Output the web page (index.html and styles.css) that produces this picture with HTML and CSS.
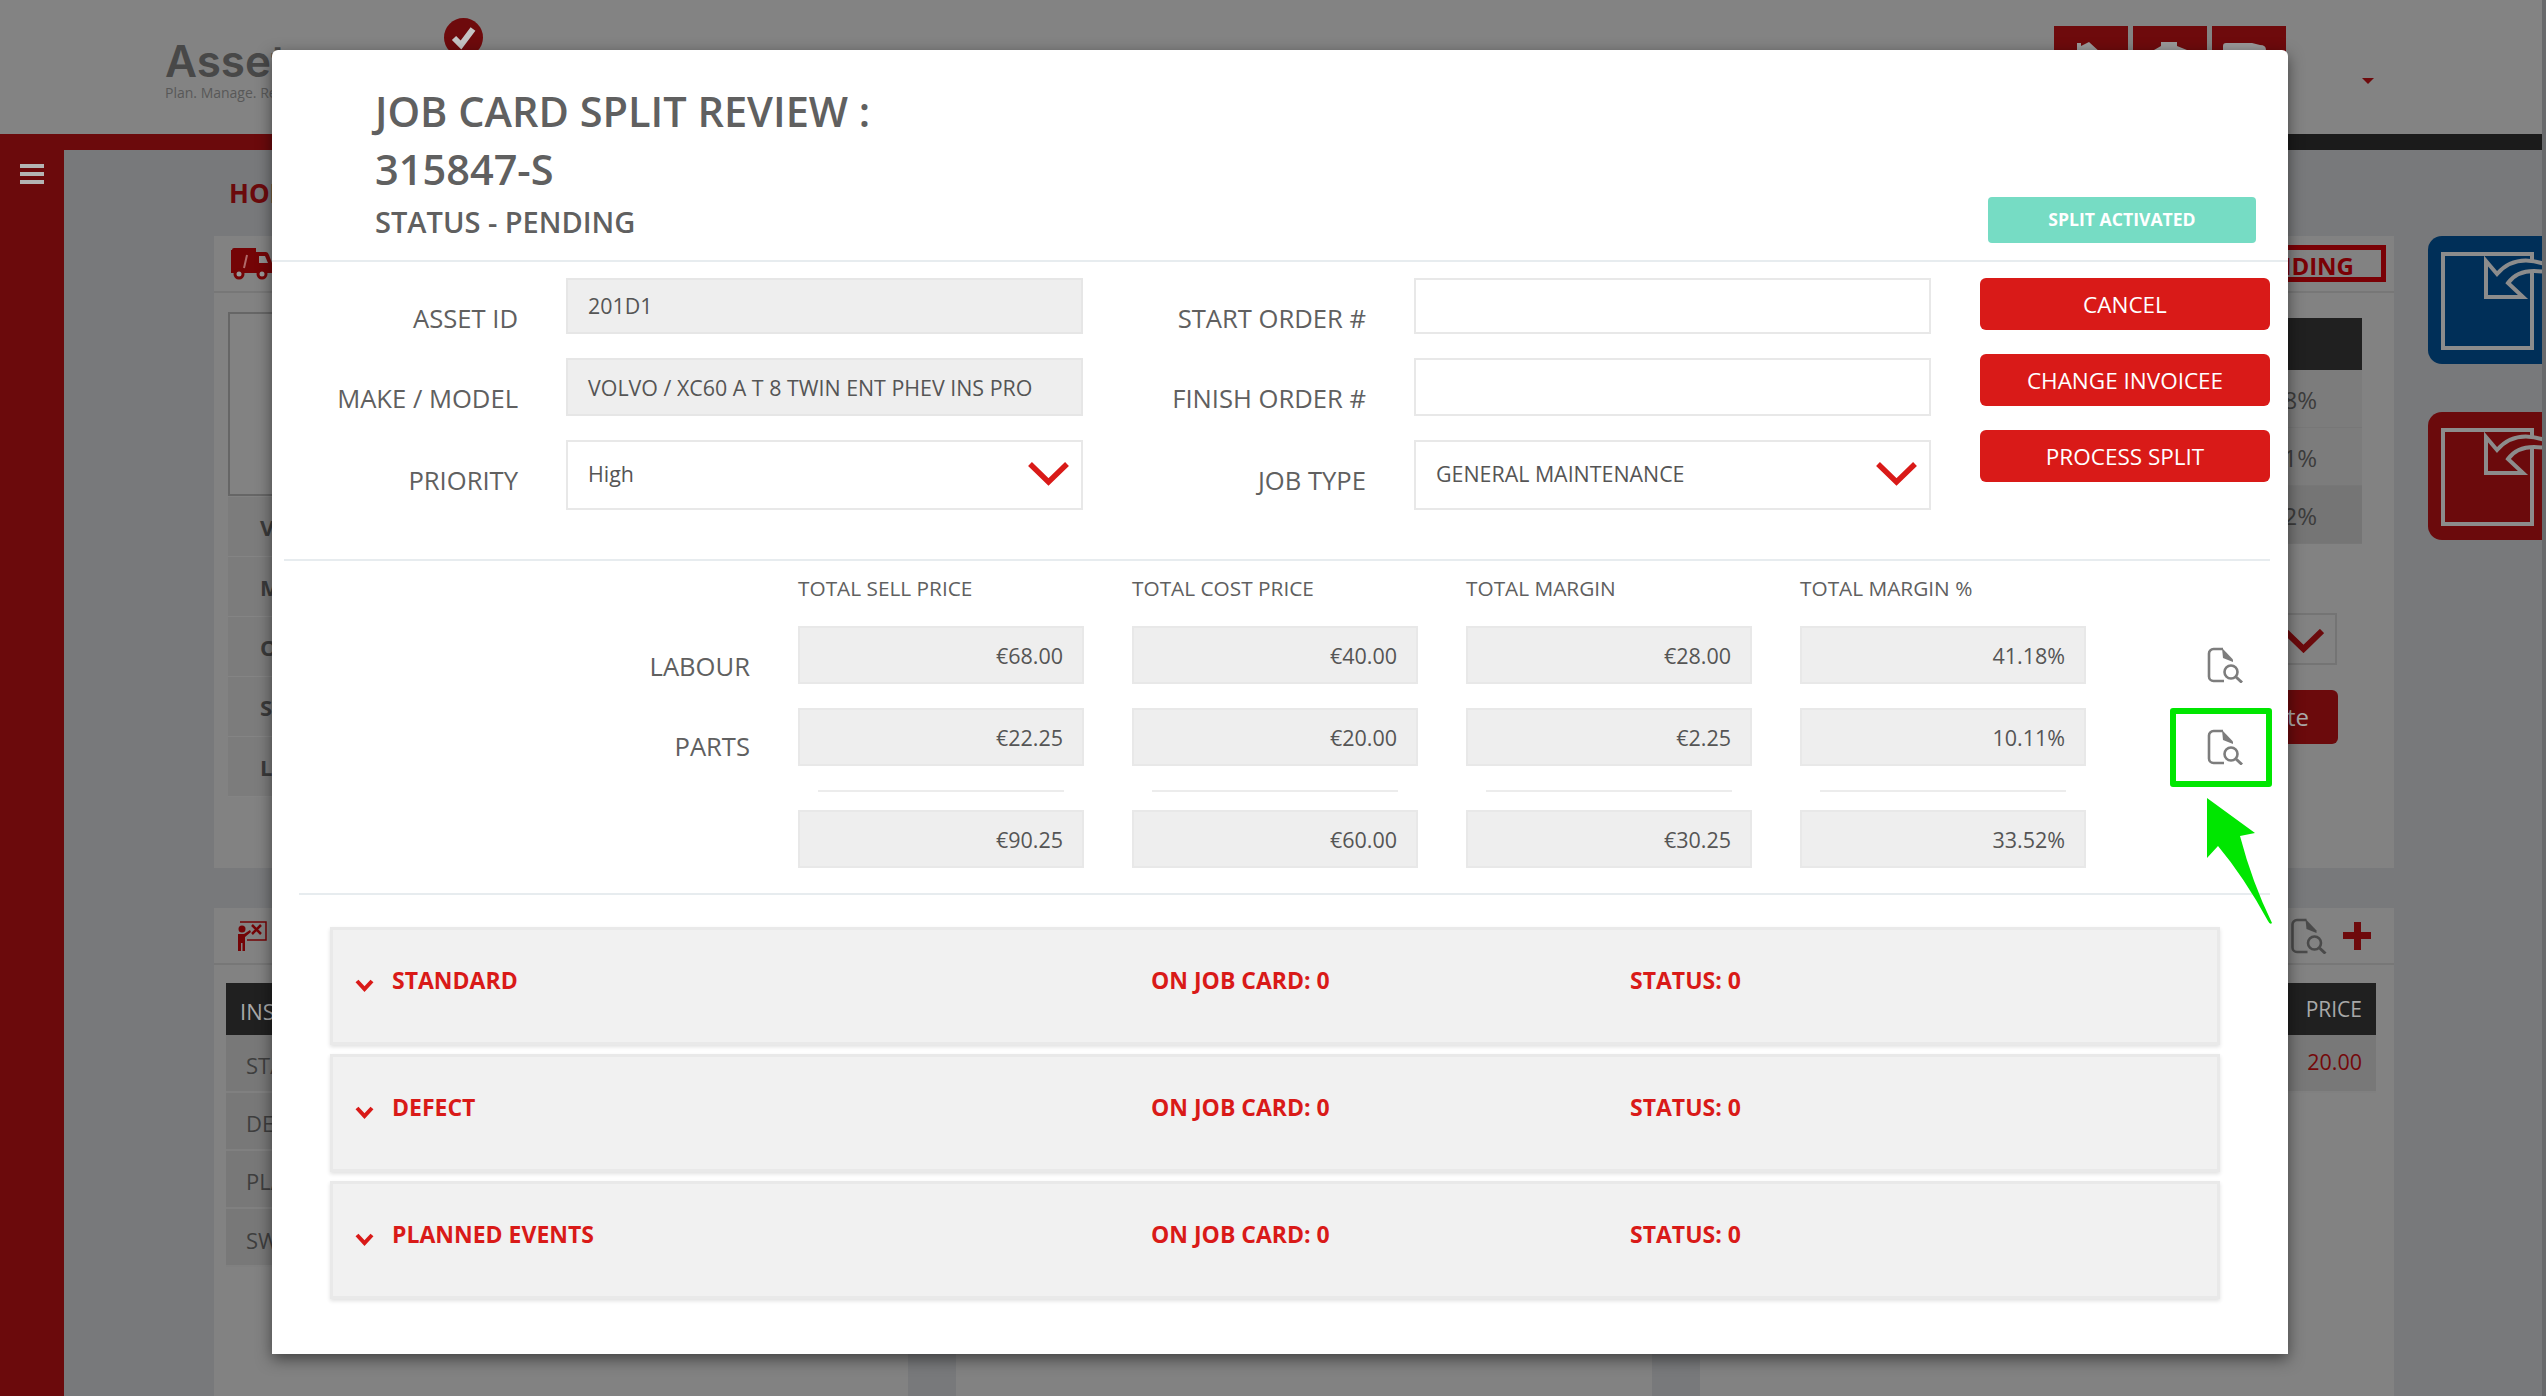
FILE: index.html
```html
<!DOCTYPE html>
<html lang="en">
<head>
    <meta charset="UTF-8">
    <meta name="viewport" content="width=device-width, initial-scale=1.0">
    <title>Job Card Split Review</title>
    <link rel="stylesheet" href="styles.css">
</head>
<body>
    <svg class="defs" width="0" height="0">
        <symbol id="doc-search" viewBox="0 0 36 36">
            <path d="M16 2H6.500a4.500 4.500 0 0 0-4.500 4.500v23a4.500 4.500 0 0 0 4.500 4.500H17" fill="none" stroke="currentColor" stroke-width="2.600"/>
            <path d="M15 1 26 12.500V15L16 11Z" fill="currentColor"/>
            <circle cx="24" cy="25" r="6.500" fill="none" stroke="currentColor" stroke-width="2.600"/>
            <path d="M29 30 35 35.500" fill="none" stroke="currentColor" stroke-width="3"/>
        </symbol>
        <symbol id="tile-icon" viewBox="0 0 130 128">
            <rect x="15" y="18" width="89" height="94" fill="none" stroke="#8c8c8c" stroke-width="4"/>
            <path d="M58 25 69 38Q88 16 122 30V37Q92 30 80 47L95 61H58Z" fill="var(--tile)" stroke="#8c8c8c" stroke-width="4"/>
        </symbol>
    </svg>

    <div class="window">
        <header class="topbar">
            <div class="logo">
                <div class="logo-name">Asset</div>
                <div class="logo-tag">Plan. Manage. Report.</div>
            </div>
            <svg class="logo-check" width="39" height="39" viewBox="0 0 39 39">
                <circle cx="19.500" cy="19.500" r="19.500" fill="#6e0a0c"/>
                <path d="M10 20 17 27 29 11" fill="none" stroke="#c4c4c4" stroke-width="6"/>
            </svg>
            <nav class="topnav">
                <div class="topnav-btn">
                    <svg width="74" height="60" viewBox="0 0 74 60"><path d="M23 24V17H27V20L35 16 47 27V40H23Z" fill="#9a9a9a"/></svg>
                </div>
                <div class="topnav-btn">
                    <svg width="74" height="60" viewBox="0 0 74 60"><path d="M21 24 28 20V16H44V20L54 24V40H21Z" fill="#9a9a9a"/></svg>
                </div>
                <div class="topnav-btn">
                    <svg width="74" height="60" viewBox="0 0 74 60"><path d="M11 20Q11 17 14 17H40L48 19Q54 19 54 24V40H11Z" fill="#9a9a9a"/></svg>
                </div>
            </nav>
            <div class="user-caret"></div>
        </header>
        <div class="stripe">
            <div class="stripe-red"></div>
            <div class="stripe-black"></div>
        </div>

        <div class="shell">
            <aside class="sidenav">
                <div class="burger"><span></span><span></span><span></span></div>
            </aside>
            <main class="content">
                <div class="crumb">HOME</div>
                <div></div>

                <div class="content-left">
                    <section class="card card-vehicle">
                        <div class="card-head">
                            <svg width="42" height="32" viewBox="0 0 42 32">
                                <path d="M2 2Q2 0 4 0H26V4H36Q38 4 39 7L42 15V25H1V2Z" fill="#740406"/>
                                <path d="M29 8H35L38 15H29Z" fill="#8e8e8e"/>
                                <path d="M17 7 14 20" stroke="#b06a6a" stroke-width="2"/>
                                <circle cx="9" cy="26" r="5.500" fill="#740406"/><circle cx="9" cy="26" r="2.500" fill="#999"/>
                                <circle cx="32" cy="26" r="5.500" fill="#740406"/><circle cx="32" cy="26" r="2.500" fill="#999"/>
                            </svg>
                            <div class="badge">PENDING</div>
                        </div>
                        <div class="card-body">
                            <div class="vehicle-left">
                                <div class="photo-box"></div>
                                <div class="info-row">VIN</div>
                                <div class="info-row">MAKE</div>
                                <div class="info-row">ODOMETER</div>
                                <div class="info-row">STATUS</div>
                                <div class="info-row">LOCATION</div>
                            </div>
                            <div class="vehicle-right">
                                <div class="mini-head"></div>
                                <div class="mini-row">41.18%</div>
                                <div class="mini-row">10.11%</div>
                                <div class="mini-row mini-dark">33.52%</div>
                                <div class="mini-select">
                                    <svg width="41" height="24" viewBox="0 0 41 24"><path d="M2 2 20.500 20 39 2" fill="none" stroke="#6b0a0c" stroke-width="6"/></svg>
                                </div>
                                <div class="mini-btn">Update</div>
                            </div>
                        </div>
                    </section>

                    <section class="card card-inspect">
                        <div class="card-head">
                            <svg class="teach-icon" width="30" height="30" viewBox="0 0 30 30">
                                <circle cx="5" cy="8" r="3.500" fill="#740406"/>
                                <path d="M1 13H7L13 9 14 11 8 16V30H5.500V22H4V30H1Z" fill="#740406"/>
                                <path d="M3 1H29V19H10" fill="none" stroke="#740406" stroke-width="1.500"/>
                                <path d="M15 4 24 13M24 4 15 13" stroke="#740406" stroke-width="2.500"/>
                            </svg>
                            <div class="card-tools">
                                <svg class="doc-dark" width="37" height="36"><use href="#doc-search"/></svg>
                                <div class="plus"></div>
                            </div>
                        </div>
                        <div class="inspect-table">
                            <div class="inspect-head"><span>INSPECTION</span><span class="price-head">PRICE</span></div>
                            <div class="inspect-row"><span>STANDARD</span><span class="price">20.00</span></div>
                            <div class="inspect-row inspect-short"><span>DEFECT</span></div>
                            <div class="inspect-row inspect-short"><span>PLANNED EVENTS</span></div>
                            <div class="inspect-row inspect-short"><span>SWITCH</span></div>
                        </div>
                    </section>

                    <div class="card-trio">
                        <div class="card"></div>
                        <div class="card"></div>
                        <div class="card"></div>
                    </div>
                </div>

                <div class="tiles">
                    <svg class="tile tile-blue" width="148" height="128"><use href="#tile-icon" width="130" height="128"/></svg>
                    <svg class="tile tile-red" width="148" height="128"><use href="#tile-icon" width="130" height="128"/></svg>
                </div>
            </main>
        </div>
    </div>

    <div class="modal">
        <div class="modal-head">
            <div class="modal-titles">
                <h1>JOB CARD SPLIT REVIEW :<br>315847-S</h1>
                <h2>STATUS - PENDING</h2>
            </div>
            <div class="split-chip">SPLIT ACTIVATED</div>
        </div>

        <div class="job-form">
            <label class="form-label">ASSET ID</label>
            <div class="field field-off">201D1</div>
            <label class="form-label">START ORDER #</label>
            <div class="field"></div>

            <label class="form-label">MAKE / MODEL</label>
            <div class="field field-off field-tall">VOLVO / XC60 A T 8 TWIN ENT PHEV INS PRO</div>
            <label class="form-label">FINISH ORDER #</label>
            <div class="field"></div>

            <label class="form-label">PRIORITY</label>
            <div class="field field-select">High
                <svg width="41" height="24" viewBox="0 0 41 24"><path d="M2 2 20.500 20 39 2" fill="none" stroke="#d91a18" stroke-width="5.500"/></svg>
            </div>
            <label class="form-label">JOB TYPE</label>
            <div class="field field-select">GENERAL MAINTENANCE
                <svg width="41" height="24" viewBox="0 0 41 24"><path d="M2 2 20.500 20 39 2" fill="none" stroke="#d91a18" stroke-width="5.500"/></svg>
            </div>

            <div class="form-actions">
                <button class="btn-red">CANCEL</button>
                <button class="btn-red">CHANGE INVOICEE</button>
                <button class="btn-red">PROCESS SPLIT</button>
            </div>
        </div>

        <div class="rule-wide"></div>

        <div class="totals">
            <div></div>
            <div class="totals-head">TOTAL SELL PRICE</div>
            <div class="totals-head">TOTAL COST PRICE</div>
            <div class="totals-head">TOTAL MARGIN</div>
            <div class="totals-head">TOTAL MARGIN %</div>
            <div></div>

            <div class="totals-label">LABOUR</div>
            <div class="amount">€68.00</div>
            <div class="amount">€40.00</div>
            <div class="amount">€28.00</div>
            <div class="amount">41.18%</div>
            <svg class="doc-icon" width="36" height="36"><use href="#doc-search"/></svg>

            <div class="totals-label totals-label-up">PARTS</div>
            <div class="amount">€22.25</div>
            <div class="amount">€20.00</div>
            <div class="amount">€2.25</div>
            <div class="amount">10.11%</div>
            <svg class="doc-icon" width="36" height="36"><use href="#doc-search"/></svg>

            <div></div>
            <div class="sum-rule"></div>
            <div class="sum-rule"></div>
            <div class="sum-rule"></div>
            <div class="sum-rule"></div>
            <div></div>

            <div></div>
            <div class="amount">€90.25</div>
            <div class="amount">€60.00</div>
            <div class="amount">€30.25</div>
            <div class="amount">33.52%</div>
            <div></div>
        </div>

        <div class="rule-wide rule-second"></div>

        <div class="panels">
            <div class="panel">
                <svg width="19" height="13" viewBox="0 0 19 13"><path d="M2 2 9.500 10 17 2" fill="none" stroke="#d91a18" stroke-width="4"/></svg>
                <span>STANDARD</span><span>ON JOB CARD: 0</span><span>STATUS: 0</span>
            </div>
            <div class="panel">
                <svg width="19" height="13" viewBox="0 0 19 13"><path d="M2 2 9.500 10 17 2" fill="none" stroke="#d91a18" stroke-width="4"/></svg>
                <span>DEFECT</span><span>ON JOB CARD: 0</span><span>STATUS: 0</span>
            </div>
            <div class="panel">
                <svg width="19" height="13" viewBox="0 0 19 13"><path d="M2 2 9.500 10 17 2" fill="none" stroke="#d91a18" stroke-width="4"/></svg>
                <span>PLANNED EVENTS</span><span>ON JOB CARD: 0</span><span>STATUS: 0</span>
            </div>
        </div>

        <!-- annotation drawn over the screenshot -->
        <div class="callout-box"></div>
        <svg class="callout-arrow" width="70" height="130" viewBox="0 0 70 130">
            <path d="M1 1 49 36 34 39Q46 85 66 126 64 128 62 124 38 80 12 49L1 61Z" fill="#00e600"/>
        </svg>
    </div>
</body>
</html>
```

FILE: styles.css
```css
* {
    box-sizing: border-box;
}
html, body {
    margin: 0;
    padding: 0;
}
body {
    position: relative;
    width: 2546px;
    height: 1396px;
    overflow: hidden;
    background-color: #68696b;
    font-family: "Open Sans", sans-serif;
}
.defs {
    position: absolute;
}

/* page behind the dialog, already dimmed */
.window {
    display: flex;
    flex-direction: column;
    width: 2542px;
    height: 1396px;
    overflow: hidden;
    background-color: #78797b;
}
.topbar {
    display: flex;
    flex: none;
    height: 134px;
    background-color: #838383;
}
.logo {
    width: 444px;
    padding: 38px 0 0 165px;
    white-space: nowrap;
}
.logo-name {
    font-family: Inter, sans-serif;
    font-size: 44px;
    font-weight: 600;
    line-height: 46px;
    color: #484848;
}
.logo-tag {
    margin-top: 1px;
    font-size: 14px;
    line-height: 15px;
    color: #585858;
}
.logo-check {
    margin-top: 18px;
}
.topnav {
    display: flex;
    gap: 5px;
    margin: 26px 0 0 1571px;
}
.topnav-btn {
    width: 74px;
    height: 60px;
    background-color: #6e0a0c;
}
.user-caret {
    width: 0;
    height: 0;
    margin: 78px 0 0 76px;
    border-left: 6px solid transparent;
    border-right: 6px solid transparent;
    border-top: 6px solid #6e0a0c;
}
.stripe {
    display: flex;
    flex: none;
    height: 16px;
}
.stripe-red {
    width: 1500px;
    background-color: #6b0a0c;
}
.stripe-black {
    flex-grow: 1;
    background-color: #1b1b1b;
}
.shell {
    display: flex;
    flex-grow: 1;
    min-height: 0;
}
.sidenav {
    flex: none;
    width: 64px;
    padding: 14px 0 0 20px;
    background-color: #6b0a0c;
}
.burger {
    display: flex;
    flex-direction: column;
    gap: 4px;
    width: 24px;
}
.burger span {
    height: 4px;
    background-color: #b4b4b4;
}
.content {
    display: grid;
    grid-template-columns: 2180px 148px;
    column-gap: 34px;
    align-content: start;
    padding: 28px 0 0 150px;
}
.crumb {
    height: 58px;
    padding-left: 15px;
    font-size: 26px;
    font-weight: 700;
    line-height: 30px;
    color: #6b0a0c;
}
.content-left {
    display: flex;
    flex-direction: column;
}
.card {
    background-color: #828282;
}
.card-head {
    display: flex;
    align-items: center;
    justify-content: space-between;
    height: 57px;
    padding: 0 8px 0 16px;
    border-bottom: 2px solid #777;
}
.badge {
    padding: 0 27px;
    height: 37px;
    border: 5px solid #7a0005;
    font-size: 24px;
    font-weight: 700;
    line-height: 31px;
    color: #7a0005;
}
.teach-icon {
    margin-left: 7px;
}
.card-vehicle {
    height: 632px;
}
.card-body {
    display: flex;
    justify-content: space-between;
    padding: 19px 32px 0 14px;
}
.vehicle-left {
    width: 300px;
}
.photo-box {
    height: 184px;
    margin-bottom: 1px;
    border: 2px solid #666;
}
.info-row {
    height: 60px;
    padding: 15px 0 0 32px;
    background-color: #7c7c7c;
    border-bottom: 1px solid #848484;
    font-size: 22px;
    font-weight: 700;
    line-height: 30px;
    color: #3a3a3a;
}
.vehicle-right {
    width: 420px;
    padding-top: 6px;
}
.mini-head {
    height: 52px;
    background-color: #202020;
}
.mini-row {
    height: 58px;
    padding: 13px 45px 0 0;
    background-color: #7c7c7c;
    border-bottom: 1px solid #777;
    font-size: 24px;
    line-height: 34px;
    text-align: right;
    color: #3c3c3c;
}
.mini-dark {
    background-color: #757575;
}
.mini-select {
    height: 52px;
    margin: 69px 25px 0 0;
    padding: 14px 0 0 339px;
    border: 2px solid #747474;
}
.mini-btn {
    height: 54px;
    margin: 25px 24px 0 0;
    padding-right: 29px;
    border-radius: 6px;
    background-color: #6b0a0c;
    font-size: 24px;
    line-height: 54px;
    text-align: right;
    color: #aaa;
}
.card-inspect {
    height: 392px;
    margin-top: 40px;
}
.card-tools {
    display: flex;
    align-items: center;
    gap: 16px;
    padding-right: 15px;
}
.doc-dark {
    color: #4a4a4a;
}
.plus {
    width: 28px;
    height: 28px;
    background:
        linear-gradient(#6e0a0c, #6e0a0c) center / 28px 7px no-repeat,
        linear-gradient(#6e0a0c, #6e0a0c) center / 7px 28px no-repeat;
}
.inspect-table {
    padding: 18px 18px 0 12px;
}
.inspect-head {
    display: flex;
    justify-content: space-between;
    height: 52px;
    padding: 2px 14px 0;
    background-color: #202020;
    font-size: 22px;
    line-height: 52px;
    color: #a8a8a8;
}
.price-head {
    margin-top: -2px;
    font-size: 21px;
}
.inspect-row {
    display: flex;
    justify-content: space-between;
    height: 58px;
    padding: 3px 14px 0 20px;
    background-color: #787878;
    border-bottom: 2px solid #808080;
    font-size: 22px;
    line-height: 55px;
    color: #3e3e3e;
}
.inspect-row + .inspect-short + .inspect-short + .inspect-short {
    padding-top: 4px;
}
.inspect-short {
    width: 300px;
}
.price {
    margin-top: -4px;
    font-size: 21.500px;
    color: #74080a;
}
.card-trio {
    display: grid;
    grid-template-columns: 694px 696px 694px;
    column-gap: 48px;
    height: 100px;
}

.tiles {
    display: flex;
    flex-direction: column;
    gap: 48px;
}
.tile {
    border-radius: 14px;
}
.tile-blue {
    --tile: #002f58;
    background-color: #002f58;
}
.tile-red {
    --tile: #6b0a0c;
    background-color: #6b0a0c;
}

/* dialog */
.modal {
    position: absolute;
    left: 272px;
    top: 50px;
    width: 2016px;
    height: 1304px;
    background-color: #fff;
    border-radius: 6px 6px 0 0;
    box-shadow: 0 5px 15px rgba(0, 0, 0, 0.5);
    color: #606060;
}
.modal-head {
    display: flex;
    align-items: flex-end;
    justify-content: space-between;
    height: 212px;
    padding: 0 32px 17px 103px;
    border-bottom: 2px solid #e7ecef;
}
.modal-titles {
    align-self: flex-start;
    padding-top: 32px;
}
.modal-head h1 {
    margin: 0;
    font-size: 41.500px;
    font-weight: 600;
    line-height: 58px;
}
.modal-head h2 {
    margin: -1px 0 0;
    font-size: 29px;
    font-weight: 600;
    line-height: 50px;
}
.split-chip {
    width: 268px;
    height: 46px;
    border-radius: 4px;
    background-color: #76dcc4;
    font-size: 17.600px;
    font-weight: 700;
    line-height: 45px;
    text-align: center;
    color: #fff;
}
.job-form {
    display: grid;
    grid-template-columns: 294px 517px 331px 517px 339px;
    grid-template-rows: 56px 58px 70px;
    row-gap: 24px;
    padding-top: 16px;
}
.form-label {
    padding: 23px 48px 0 0;
    font-size: 25.600px;
    line-height: 36px;
    text-align: right;
    white-space: nowrap;
}
.field {
    border: 2px solid #e8e8e8;
    padding: 0 20px;
    font-size: 21.400px;
    line-height: 52px;
    color: #555;
}
.field-off {
    background-color: #eee;
    border-color: #e6e6e6;
}
.field-tall {
    line-height: 56px;
}
.field-select {
    display: flex;
    align-items: center;
    justify-content: space-between;
    padding-right: 12px;
    padding-bottom: 2px;
}
.form-actions {
    display: flex;
    flex-direction: column;
    gap: 24px;
    grid-column: 5;
    grid-row: 1 / 4;
    margin-left: 49px;
    width: 290px;
}
.btn-red {
    height: 52px;
    border: none;
    border-radius: 6px;
    background-color: #d91a18;
    font-family: "Open Sans", sans-serif;
    font-size: 22.500px;
    color: #fff;
}
.rule-wide {
    height: 2px;
    margin: 49px 18px 0 12px;
    background-color: #e7ecef;
}
.rule-second {
    margin: 25px 18px 0 27px;
}
.totals {
    display: grid;
    grid-template-columns: 478px 286px 286px 286px 286px 1fr;
    grid-template-rows: 53px 82px 82px 20px 58px;
    column-gap: 48px;
    padding-top: 12px;
}
.totals-head {
    padding-top: 1px;
    font-size: 20.800px;
    line-height: 29px;
    white-space: nowrap;
}
.totals-label {
    padding-top: 25px;
    font-size: 25.600px;
    line-height: 32px;
    text-align: right;
}
.totals-label-up {
    padding-top: 23px;
}
.amount {
    height: 58px;
    padding-right: 19px;
    background-color: #eee;
    border: 2px solid #e8e8e8;
    font-size: 21.500px;
    line-height: 55px;
    text-align: right;
    color: #555;
}
.sum-rule {
    height: 2px;
    margin: 0 20px;
    background-color: #ececec;
}
.doc-icon {
    margin: 21px 0 0 73px;
    color: #7d7d7d;
}
.panels {
    display: flex;
    flex-direction: column;
    gap: 9px;
    margin: 32px 68px 0 58px;
}
.panel {
    display: grid;
    grid-template-columns: 37px 759px 479px 1fr;
    height: 118px;
    padding: 36px 0 0 22px;
    border: 3px solid #e9e9e9;
    background-color: #f1f1f1;
    box-shadow: 0 2px 4px rgba(0, 0, 0, 0.12);
    font-size: 23px;
    font-weight: 700;
    line-height: 28px;
    color: #d91a18;
}
.panel svg {
    margin-top: 13px;
}
.callout-box {
    position: absolute;
    left: 1898px;
    top: 658px;
    width: 102px;
    height: 79px;
    border: 6px solid #00e600;
    border-radius: 3px;
}
.callout-arrow {
    position: absolute;
    left: 1934px;
    top: 747px;
}
```
